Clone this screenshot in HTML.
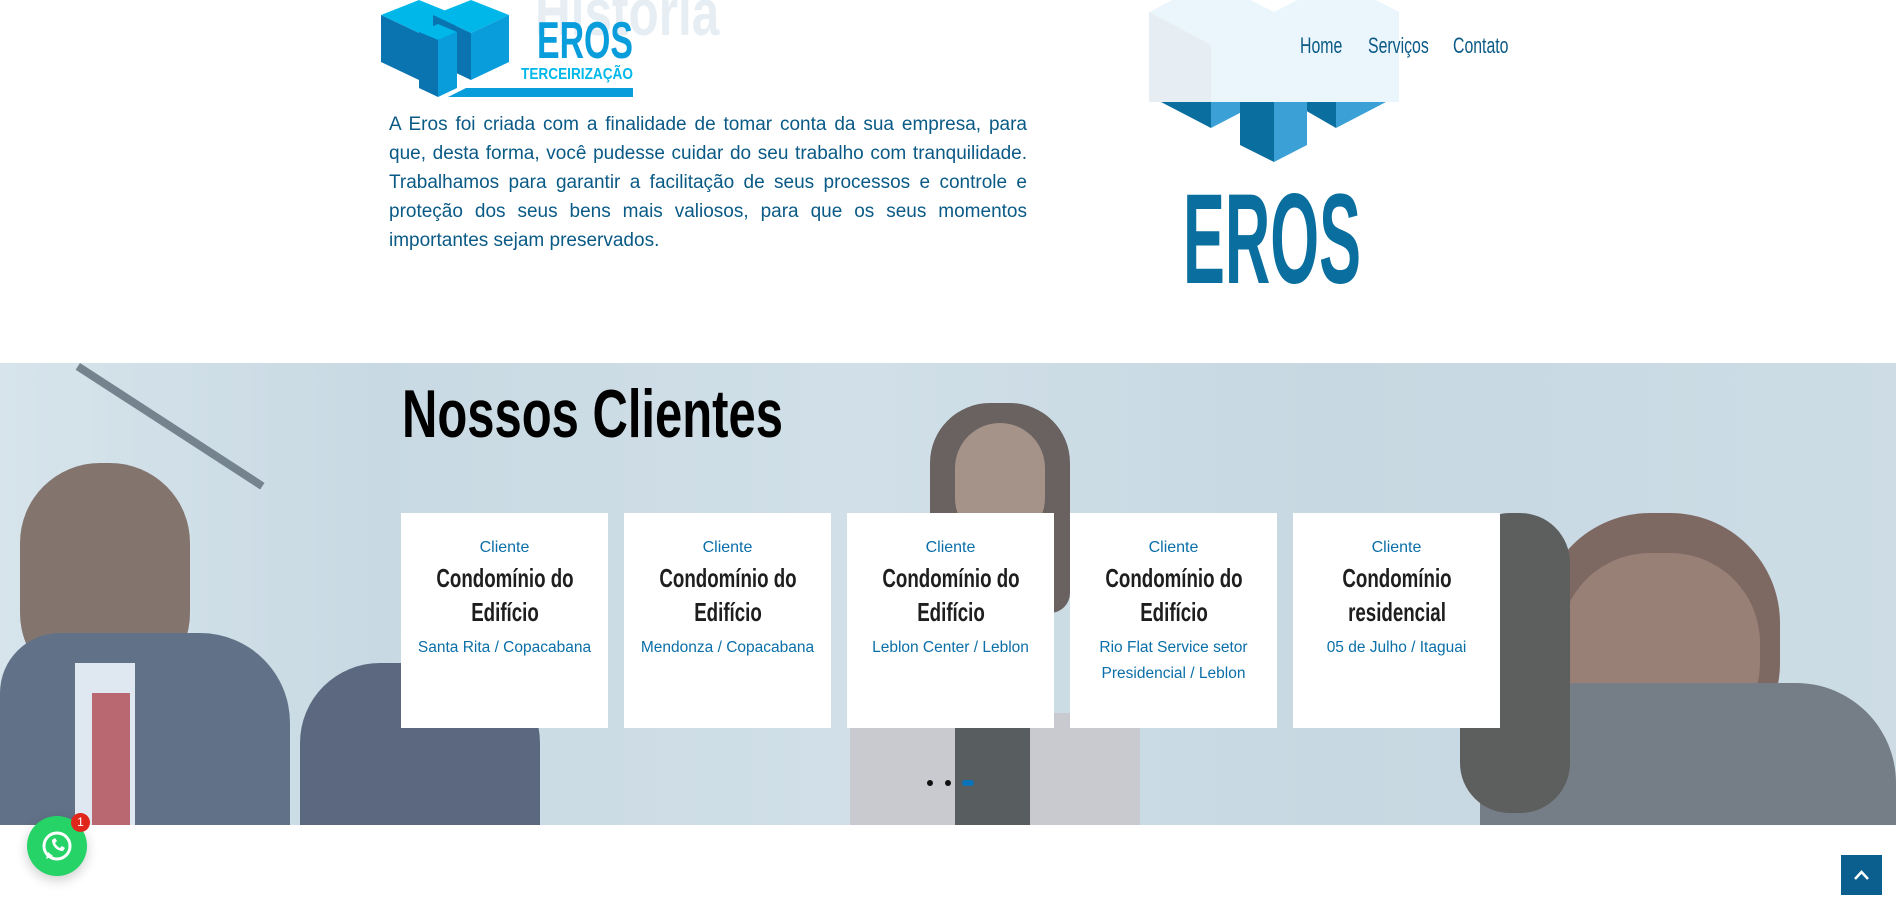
<!DOCTYPE html>
<html><head><meta charset="utf-8"><style>
*{margin:0;padding:0;box-sizing:border-box}
body{width:1896px;height:903px;overflow:hidden;background:#fff;font-family:"Liberation Sans",sans-serif;position:relative}
.abs{position:absolute}
.para{left:389px;top:110px;width:638px;font-size:19px;line-height:29px;color:#0a5a86;text-align:justify}
.nav a{position:absolute;top:33px;font-size:22px;color:#0a5a86;text-decoration:none;transform:scaleX(.72);transform-origin:0 0;white-space:nowrap}
.band{left:0;top:363px;width:1896px;height:462px;overflow:hidden;
background:linear-gradient(90deg,#dce7ed 0,#c9d9e2 20%,#d4e1e8 45%,#c7d7e1 70%,#cfdde5 100%)}
.card{position:absolute;top:150px;width:207px;height:215px;background:#fff;text-align:center}
.card .c{margin-top:26px;font-size:16px;color:#0a6fa8}
.card h3{font-weight:bold;font-size:26px;line-height:34px;color:#1e1e1e;margin-top:4px;width:288px;margin-left:-40.5px;transform:scaleX(.72)}
.card p{font-size:15.5px;line-height:26px;color:#0a6fa8;margin-top:6px;padding:0 12px}
</style></head><body>
<div class="abs" style="left:535px;top:-26px;font-size:66px;font-weight:bold;color:#e6eef4;transform:scaleX(.75);transform-origin:0 0">História</div>
<svg class="abs" style="left:381px;top:0" width="255" height="98" viewBox="0 0 255 98">
<polygon points="0,15 38,0 75,15 38,33" fill="#00b7ea"/>
<polygon points="0,15 38,33 38,80 0,62" fill="#0a74b0"/>
<polygon points="38,33 75,15 75,62 38,80" fill="#0a9ddc"/>
<polygon points="52,15 90,0 128,15 90,33" fill="#00b7ea"/>
<polygon points="52,15 90,33 90,80 52,62" fill="#0a74b0"/>
<polygon points="90,33 128,15 128,62 90,80" fill="#0a9ddc"/>
<polygon points="38,32 57,24 76,32 57,40" fill="#00b7ea"/>
<polygon points="38,32 57,40 57,97 38,88" fill="#0a74b0"/>
<polygon points="57,40 76,32 76,88 57,97" fill="#0a9ddc"/>
<polygon points="67,97 85,88 252,88 252,97" fill="#0a9ddc"/>
<text x="156" y="58" font-family="Liberation Sans,sans-serif" font-weight="bold" font-size="52" fill="#0a9ddc" textLength="96" lengthAdjust="spacingAndGlyphs">EROS</text>
<text x="140" y="79" font-family="Liberation Sans,sans-serif" font-weight="bold" font-size="16" fill="#00b7ea" textLength="112" lengthAdjust="spacingAndGlyphs">TERCEIRIZAÇÃO</text>
</svg>
<div class="abs para">A Eros foi criada com a finalidade de tomar conta da sua empresa, para que, desta forma, você pudesse cuidar do seu trabalho com tranquilidade. Trabalhamos para garantir a facilitação de seus processos e controle e proteção dos seus bens mais valiosos, para que os seus momentos importantes sejam preservados.</div>
<svg class="abs" style="left:1149px;top:0" width="252" height="290" viewBox="0 0 252 290">
<polygon points="12,102 62,128 62,102" fill="#0a6e9e"/>
<polygon points="62,102 62,128 112,102" fill="#3aa0d6"/>
<polygon points="142,102 187,128 187,102" fill="#0a6e9e"/>
<polygon points="187,102 187,128 237,102" fill="#3aa0d6"/>
<polygon points="91,102 91,145 125,162 125,102" fill="#0a6e9e"/>
<polygon points="125,102 125,162 158,145 158,102" fill="#3aa0d6"/>
<polygon points="0,12 62,-20 125,12 188,-20 250,12 250,102 0,102" fill="#eaf6fb"/>
<polygon points="0,12 62,45 62,102 0,102" fill="#e6eef4"/>
<text x="34" y="283" font-family="Liberation Sans,sans-serif" font-weight="bold" font-size="128" fill="#0a6e9e" textLength="178" lengthAdjust="spacingAndGlyphs">EROS</text>
</svg>
<div class="nav">
<a style="left:1300px">Home</a><a style="left:1368px">Serviços</a><a style="left:1453px">Contato</a></div>
<div class="abs band">
<div class="abs" style="left:80px;top:0;width:220px;height:8px;background:#5a6670;transform:rotate(33deg);transform-origin:0 0"></div>
<div class="abs" style="left:930px;top:40px;width:140px;height:210px;border-radius:60px 60px 20px 20px;background:#4a3a34"></div>
<div class="abs" style="left:955px;top:60px;width:90px;height:120px;border-radius:45px;background:#9a7a68"></div>
<div class="abs" style="left:850px;top:350px;width:290px;height:112px;background:#c8c4c8"></div>
<div class="abs" style="left:955px;top:360px;width:75px;height:102px;background:#333"></div>
<div class="abs" style="left:20px;top:100px;width:170px;height:230px;border-radius:80px;background:#6d5246"></div>
<div class="abs" style="left:0;top:270px;width:290px;height:192px;border-radius:60px 90px 0 0;background:#3f4f68"></div>
<div class="abs" style="left:75px;top:300px;width:60px;height:162px;background:#e7ecf3"></div>
<div class="abs" style="left:92px;top:330px;width:38px;height:132px;background:#b5404a"></div>
<div class="abs" style="left:300px;top:300px;width:240px;height:162px;border-radius:80px 80px 0 0;background:#38425e"></div>
<div class="abs" style="left:1540px;top:150px;width:240px;height:260px;border-radius:110px;background:#654236"></div>
<div class="abs" style="left:1560px;top:190px;width:200px;height:200px;border-radius:90px;background:#8a6252"></div>
<div class="abs" style="left:1480px;top:320px;width:416px;height:142px;border-radius:100px 100px 0 0;background:#5a5e66"></div>
<div class="abs" style="left:1460px;top:150px;width:110px;height:300px;border-radius:50px;background:#3a3430"></div>
<div class="abs" style="left:0;top:0;width:1896px;height:462px;background:rgba(200,220,232,.25)"></div>
<div class="abs" style="left:402px;top:12px;font-size:68px;font-weight:bold;color:#000;transform:scaleX(.72);transform-origin:0 0;white-space:nowrap">Nossos Clientes</div>
<div class="card" style="left:401px"><div class="c">Cliente</div><h3>Condomínio do Edifício</h3><p>Santa Rita / Copacabana</p></div>
<div class="card" style="left:624px"><div class="c">Cliente</div><h3>Condomínio do Edifício</h3><p>Mendonza / Copacabana</p></div>
<div class="card" style="left:847px"><div class="c">Cliente</div><h3>Condomínio do Edifício</h3><p>Leblon Center / Leblon</p></div>
<div class="card" style="left:1070px"><div class="c">Cliente</div><h3>Condomínio do Edifício</h3><p>Rio Flat Service setor Presidencial / Leblon</p></div>
<div class="card" style="left:1293px"><div class="c">Cliente</div><h3>Condomínio<br>residencial</h3><p>05 de Julho / Itaguai</p></div>
<div class="abs" style="left:927px;top:417px;width:6px;height:6px;border-radius:3px;background:#111"></div>
<div class="abs" style="left:945px;top:417px;width:6px;height:6px;border-radius:3px;background:#111"></div>
<div class="abs" style="left:962px;top:417px;width:12px;height:6px;border-radius:3px;background:#0a72b8"></div>
</div>
<div class="abs" style="left:27px;top:816px;width:60px;height:60px;border-radius:30px;background:#25d366;box-shadow:0 4px 12px rgba(0,0,0,.2)"></div>
<svg class="abs" style="left:37px;top:826px" width="40" height="40" viewBox="0 0 40 40"><circle cx="20" cy="20" r="13" fill="none" stroke="#fff" stroke-width="3"/><path d="M9 33 L11 26 L16 30Z" fill="#fff"/><path d="M15 14c0 6 5 11 11 11l2-3-3-2-2 2c-2-1-4-3-5-5l2-2-2-3z" fill="#fff"/></svg>
<div class="abs" style="left:71px;top:813px;width:19px;height:19px;border-radius:10px;background:#e0261b;color:#fff;font-size:12px;text-align:center;line-height:19px">1</div>
<div class="abs" style="left:1841px;top:855px;width:41px;height:40px;background:#0a5f8e"><svg width="41" height="40"><path d="M14 24 L20.5 17 L27 24" fill="none" stroke="#fff" stroke-width="2.5"/></svg></div>
</body></html>
